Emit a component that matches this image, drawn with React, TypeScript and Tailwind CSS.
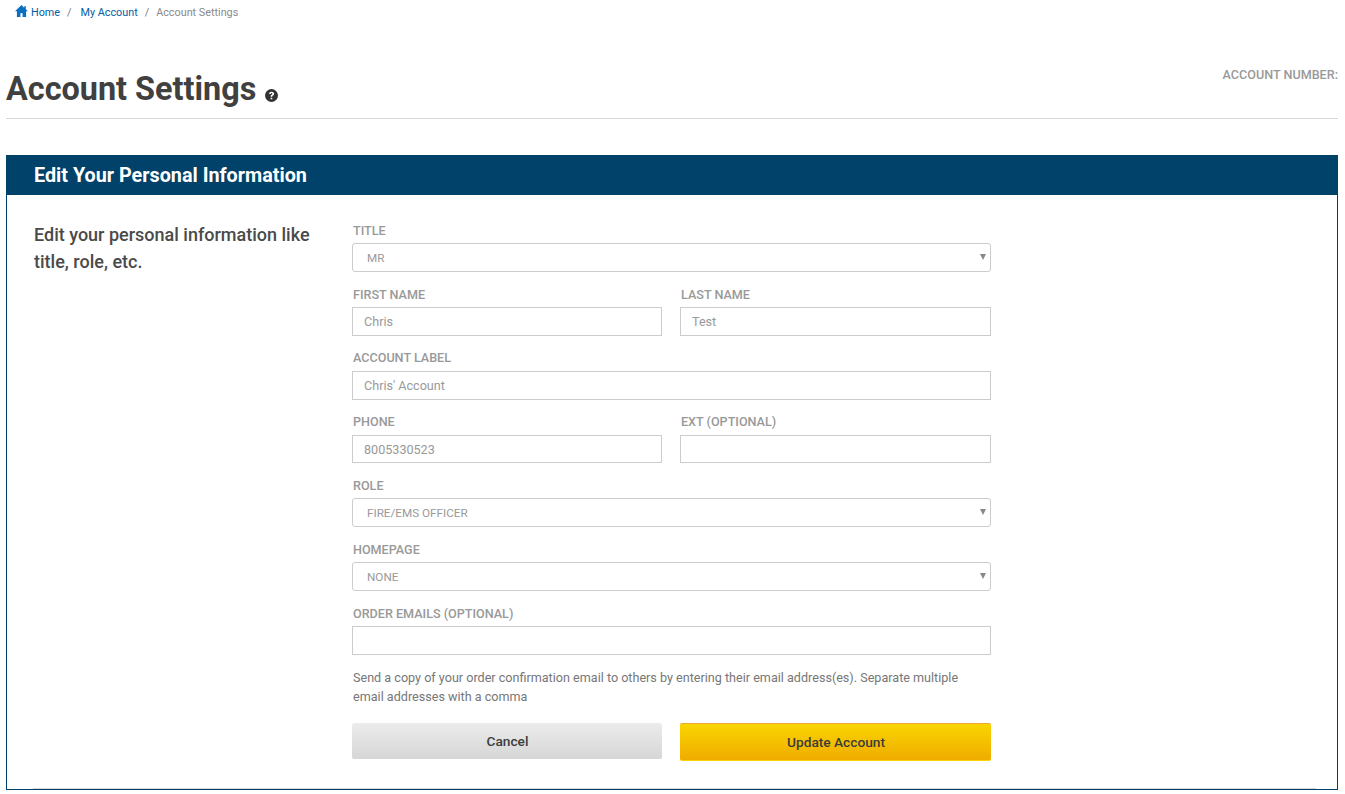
function Label({ children, low }: { children: React.ReactNode; low?: boolean }) {
  return <div className={low ? "text-[12.6px] leading-[16px] font-medium text-[#999] h-[16px] pt-px pl-px mb-[5px] uppercase" : "text-[12.6px] leading-[16px] font-medium text-[#999] h-[16px] pl-px mb-[5px] uppercase"}>{children}</div>;
}
function Input({ value, short }: { value?: string; short?: boolean }) {
  return (
    <div className={short ? "h-[28px] border border-[#ccc] bg-white pl-[11px] text-[12.6px] leading-[27px] text-[#999]" : "h-[29px] border border-[#ccc] bg-white pl-[11px] text-[12.6px] leading-[27px] text-[#999]"}>
      {value}
    </div>
  );
}
function Select({ value }: { value: string }) {
  return (
    <div className="h-[29px] border border-[#ccc] rounded-[3px] bg-white pl-[14px] pr-[4px] text-[11.7px] leading-[27px] text-[#999] flex justify-between items-center">
      <span className="pt-px">{value}</span>
      <svg width="6" height="6" viewBox="0 0 6 6" className="mt-[-2px]"><path d="M0 0h6L3 6z" fill="#888" /></svg>
    </div>
  );
}
function Field({ label, children, className, low }: { label: string; children: React.ReactNode; className?: string; low?: boolean }) {
  return (
    <div className={className}>
      <Label low={low}>{label}</Label>
      {children}
    </div>
  );
}
export default function App() {
  return (
    <div className="w-[1345px] h-[794px] overflow-hidden bg-white font-['Roboto',sans-serif] text-[#3c3c3c]">
      <div className="h-[24px] pl-[15px] pt-[2px] flex items-center text-[10.8px] text-[#005ea8]">
        <svg width="13" height="12" viewBox="0 1 24 22" className="mr-[3px] mt-[-4px]"><path d="M12 1 0 12.5h3.5V23h6.5v-7h4v7h6.5V12.5H24l-4-3.8V3h-3v2.8z" fill="#0b6fc0" /></svg>
        <span>Home</span>
        <span className="text-[#777] ml-[7px] mr-[9px]">/</span>
        <span>My Account</span>
        <span className="text-[#777] ml-[7px] mr-[7px]">/</span>
        <span className="text-[#8a8a8a]">Account Settings</span>
      </div>
      <div className="ml-[6px] mr-[7px] h-[95px] border-b border-[#d8d8d8] flex justify-between items-start">
        <div className="flex items-end mt-[47px]">
          <h1 className="text-[32.4px] leading-[36px] font-bold text-[#404040]">Account Settings</h1>
          <svg width="13" height="13" viewBox="0 0 24 24" className="ml-[9px] mb-[5px]"><circle cx="12" cy="12" r="12" fill="#333" /><path d="M7.5 9.2C7.8 6.6 9.6 5 12.2 5c2.6 0 4.5 1.6 4.5 3.8 0 1.6-.8 2.5-2 3.3-1 .7-1.3 1-1.3 2.2h-3c0-2 .6-2.9 1.9-3.8.9-.6 1.3-1 1.3-1.6 0-.8-.6-1.3-1.4-1.3-.9 0-1.5.6-1.7 1.7zM10.4 16h3v3h-3z" fill="#fff" /></svg>
        </div>
        <div className="mt-[44px] text-[12.6px] leading-[14px] font-medium text-[#999]">ACCOUNT NUMBER:</div>
      </div>
      <div className="ml-[6px] mr-[7px] mt-[36px] h-[635px] border border-[#00426a] border-t-0 relative">
        <div className="h-[40px] bg-[#00426a] -mx-px pl-[28px] pt-px text-[19.8px] leading-[40px] font-bold text-white">Edit Your Personal Information</div>
        <div className="flex pl-[27px]">
          <div className="w-[318px] pt-[26px] text-[18px] leading-[27px] font-medium text-[#4a4a4a]">
            Edit your personal information like<br />title, role, etc.
          </div>
          <div className="w-[639px] pt-[27px] flex flex-col">
            <Field label="Title" low><Select value="MR" /></Field>
            <div className="grid grid-cols-[310px_311px] gap-x-[18px] mt-[14px]">
              <Field label="First Name" low><Input value="Chris" /></Field>
              <Field label="Last Name" low><Input value="Test" /></Field>
            </div>
            <Field label="Account Label" className="mt-[14px]"><Input value="Chris' Account" /></Field>
            <div className="grid grid-cols-[310px_311px] gap-x-[18px] mt-[14px]">
              <Field label="Phone"><Input value="8005330523" short /></Field>
              <Field label="Ext (Optional)"><Input short /></Field>
            </div>
            <Field label="Role" low className="mt-[14px]"><Select value="FIRE/EMS OFFICER" /></Field>
            <Field label="Homepage" low className="mt-[14px]"><Select value="NONE" /></Field>
            <Field label="Order Emails (Optional)" low className="mt-[14px]"><Input /></Field>
            <p className="mt-[13px] pl-px pr-[30px] text-[12.6px] leading-[19px] text-[#777]">
              Send a copy of your order confirmation email to others by entering their email address(es). Separate multiple email addresses with a comma
            </p>
            <div className="grid grid-cols-[310px_311px] gap-x-[18px] mt-[17px]">
              <div className="h-[36px] pl-px rounded-[2px] bg-gradient-to-b from-[#ececec] to-[#d6d6d6] text-center text-[13.7px] leading-[36px] font-medium text-[#3c3c3c]">Cancel</div>
              <div className="h-[38px] pl-px rounded-[2px] border-t border-b border-t-[#eaa63a] border-b-[#f8d500] bg-gradient-to-b from-[#f8d500] to-[#f0ac00] text-center text-[13.7px] leading-[36px] font-medium text-[#3c3c3c]">Update Account</div>
            </div>
          </div>
        </div>
        <div className="absolute left-[26px] right-[21px] bottom-0 h-px bg-[#d8d8d8]" />
      </div>
    </div>
  );
}
